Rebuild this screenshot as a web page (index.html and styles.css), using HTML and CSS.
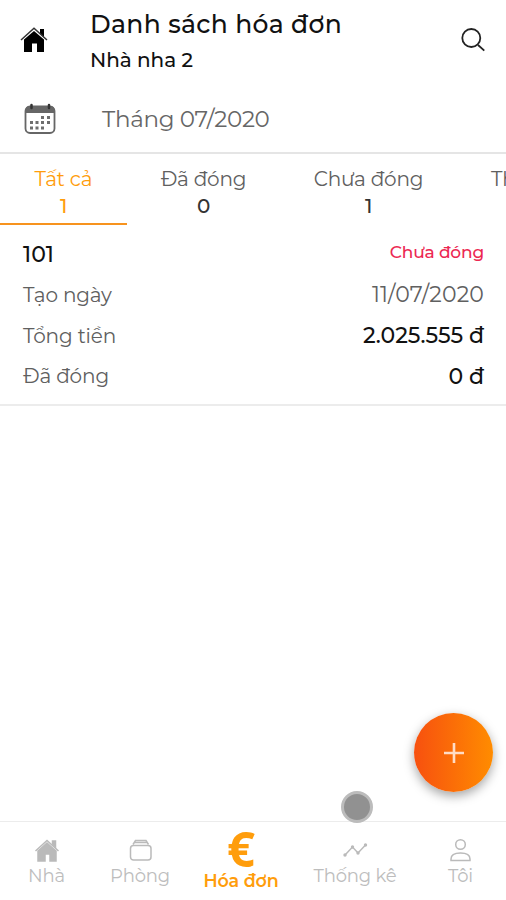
FILE: index.html
```html
<!DOCTYPE html>
<html lang="vi">
<head>
<meta charset="utf-8">
<title>Danh sách hóa đơn</title>
<link rel="stylesheet" href="styles.css">
</head>
<body>
<div class="app">
  <header class="header">
    <svg class="home" viewBox="0 0 28 28"><path d="M20 3h4v9l-4-4z"/><path d="M4 13.500 14 5l10 8.500V26h-7v-8.500h-5V26H4z"/><path class="gap" d="M1 15 14 3.500 27 15"/><path class="roof" d="M1 14 14 2.300 27 14"/></svg>
    <div class="titles">
      <h1>Danh sách hóa đơn</h1>
      <p>Nhà nha 2</p>
    </div>
    <svg class="search" viewBox="0 0 26 26"><circle cx="11.3" cy="11" r="9"/><path d="m18 18 6.3 5.7"/></svg>
  </header>
  <section class="month">
    <svg class="calendar" viewBox="0 0 32 32"><rect class="page" x="1.5" y="3.5" width="29" height="26.5" rx="4.5"/><path class="band" d="M1.500 10V7Q1.500 3 6 3h20q4.500 0 4.500 4v3z"/><path class="rings" d="M7.500 2v3M25 2v3"/><path class="days" d="M17 14.500h3m3 0h3M6 19.500h3m2.500 0h3m2.500 0h3m3 0h3M6 25h3m2.500 0h3m2.500 0h3"/></svg>
    <span>Tháng 07/2020</span>
  </section>
  <nav class="tabs">
    <div class="tab tab-all active"><span>Tất cả</span><b>1</b></div>
    <div class="tab tab-paid"><span>Đã đóng</span><b>0</b></div>
    <div class="tab tab-due"><span>Chưa đóng</span><b>1</b></div>
    <div class="tab tab-more"><span>Th</span></div>
  </nav>
  <main>
    <article class="invoice">
      <div class="row"><strong>101</strong><span class="status">Chưa đóng</span></div>
      <div class="row"><span>Tạo ngày</span><span class="date">11/07/2020</span></div>
      <div class="row"><span>Tổng tiền</span><strong>2.025.555 đ</strong></div>
      <div class="row"><span>Đã đóng</span><strong>0 đ</strong></div>
    </article>
  </main>
  <button class="add" aria-label="Thêm"><svg viewBox="0 0 24 24"><path d="M12 2v20M2 12h20"/></svg></button>
  <i class="touch"></i>
  <footer class="bottom">
    <div class="item"><svg viewBox="0 0 28 28"><path class="fill" d="M5 15 14 7l9 8v10h-6v-7h-5v7H5zM19.500 5h3v6l-3-3z"/><path d="M2.500 15 14 4.500 25.500 15"/></svg><span>Nhà</span></div>
    <div class="item"><svg viewBox="0 0 28 28"><rect x="4.500" y="9.500" width="20.500" height="14.500" rx="3"/><path d="m7 8.500 2.500-4H20l2.500 4M8.500 6.500H21"/></svg><span>Phòng</span></div>
    <div class="item current"><span class="euro">€</span><span>Hóa đơn</span></div>
    <div class="item"><svg viewBox="0 0 28 28"><path d="m4 19 7.500-8 5.500 6 7.500-8"/><g class="fill dots"><circle cx="4" cy="19" r="1.700"/><circle cx="11.500" cy="11" r="1.700"/><circle cx="17" cy="17" r="1.700"/><circle cx="24.500" cy="9" r="1.700"/></g></svg><span>Thống kê</span></div>
    <div class="item"><svg viewBox="0 0 28 28"><circle cx="13.500" cy="8.500" r="4.800"/><path d="M4 24.500v-1.500c0-4 4-6 9.500-6s9.500 2 9.500 6v1.500z"/></svg><span>Tôi</span></div>
  </footer>
</div>
</body>
</html>
```
FILE: styles.css
```css
* { box-sizing: border-box; }
body { margin: 0; background: #fff; color: #111; font-family: Montserrat, Inter, "Noto Sans", sans-serif; }
h1, p { margin: 0; font-weight: 500; }
svg { display: block; fill: none; }
span, strong { white-space: nowrap; }
.app { position: relative; width: 506px; height: 900px; overflow: hidden; display: flex; flex-direction: column; }

.header { height: 85px; display: flex; align-items: flex-start; padding: 0 20px; }
.home { width: 28px; height: 28px; margin-top: 26px; fill: #000; }
.home .roof { fill: none; stroke: #333; stroke-width: 1.5; }
.home .gap { fill: none; stroke: #fff; stroke-width: 1; }
.titles { flex: 1; margin-left: 42px; padding-top: 8px; }
h1 { font-size: 25px; line-height: 32px; letter-spacing: .35px; }
.titles p { font-size: 20px; line-height: 26px; margin-top: 7px; letter-spacing: -.05px; }
.search { width: 26px; height: 26px; margin-top: 27px; stroke: #222; stroke-width: 1.8; }

.month { height: 69px; display: flex; align-items: center; padding: 0 24px; border-bottom: 2px solid #e5e5e5; color: #666; font-size: 23px; letter-spacing: -.3px; font-weight: 400; }
.calendar { width: 32px; height: 32px; margin-right: 46px; }
.page { stroke: #666; stroke-width: 1.8; }
.band { fill: #666; }
.rings { stroke: #333; stroke-width: 2.5; stroke-linecap: round; }
.days { stroke: #555; stroke-width: 3; stroke-opacity: .85; }

.tabs { display: flex; height: 71px; flex: none; overflow: hidden; color: #606060; font-size: 20px; letter-spacing: -.2px; font-weight: 400; }
.tab { flex: none; display: flex; flex-direction: column; align-items: center; padding-top: 11px; }
.tab span { line-height: 28px; }
.tab b { font-size: 20px; line-height: 26px; font-weight: 500; color: #333; }
.tab-all { width: 127px; }
.tab-paid { width: 153px; }
.tab-due { width: 177px; }
.tab-more { padding-left: 34px; }
.tab.active, .active b { color: #ff9d0c; }
.active { border-bottom: 2px solid #f7931e; }

.invoice { padding: 9px 22px 7px 23px; border-bottom: 2px solid #ececec; font-size: 20px; letter-spacing: -.15px; color: #606060; }
.row { height: 40.67px; display: flex; justify-content: space-between; align-items: center; }
.row strong { font-weight: 500; font-size: 22px; letter-spacing: 0; color: #111; }
.row .date { font-size: 22px; letter-spacing: .15px; }
.row .status { color: #ec2852; font-size: 17px; font-weight: 500; letter-spacing: -.15px; margin-top: -5px; }

.add { position: absolute; left: 414px; top: 713px; width: 79px; height: 79px; border: 0; border-radius: 50%; padding: 0; display: grid; place-items: center; background: linear-gradient(90deg, #f7500f, #ff8c00); box-shadow: 0 4px 11px rgba(0,0,0,.36); }
.add svg { width: 24px; height: 24px; stroke: #ffdcc5; stroke-width: 2.6; }
.touch { position: absolute; z-index: 2; left: 341px; top: 791px; width: 32px; height: 32px; border-radius: 50%; background: #919191; border: 3px solid #bcbcbc; }

.bottom { height: 79px; margin-top: auto; display: grid; grid-template-columns: 93px 94px 108px 120px 91px; border-top: 1px solid #ececec; color: #bdbdbd; font-size: 18px; letter-spacing: -.15px; font-weight: 400; }
.item { display: flex; flex-direction: column; align-items: center; padding-top: 14px; }
.item svg { width: 28px; height: 28px; stroke: #bababa; stroke-width: 1.5; }
.item .fill { fill: #bababa; }
.item .dots { stroke: none; }
.item span { line-height: 25px; }
.item.current { color: #ff9d0c; padding-top: 1px; font-size: 17.5px; font-weight: 600; }
.item .euro { font-family: "Open Sans", sans-serif; font-size: 49px; line-height: 50px; height: 45px; font-weight: 700; }
```
